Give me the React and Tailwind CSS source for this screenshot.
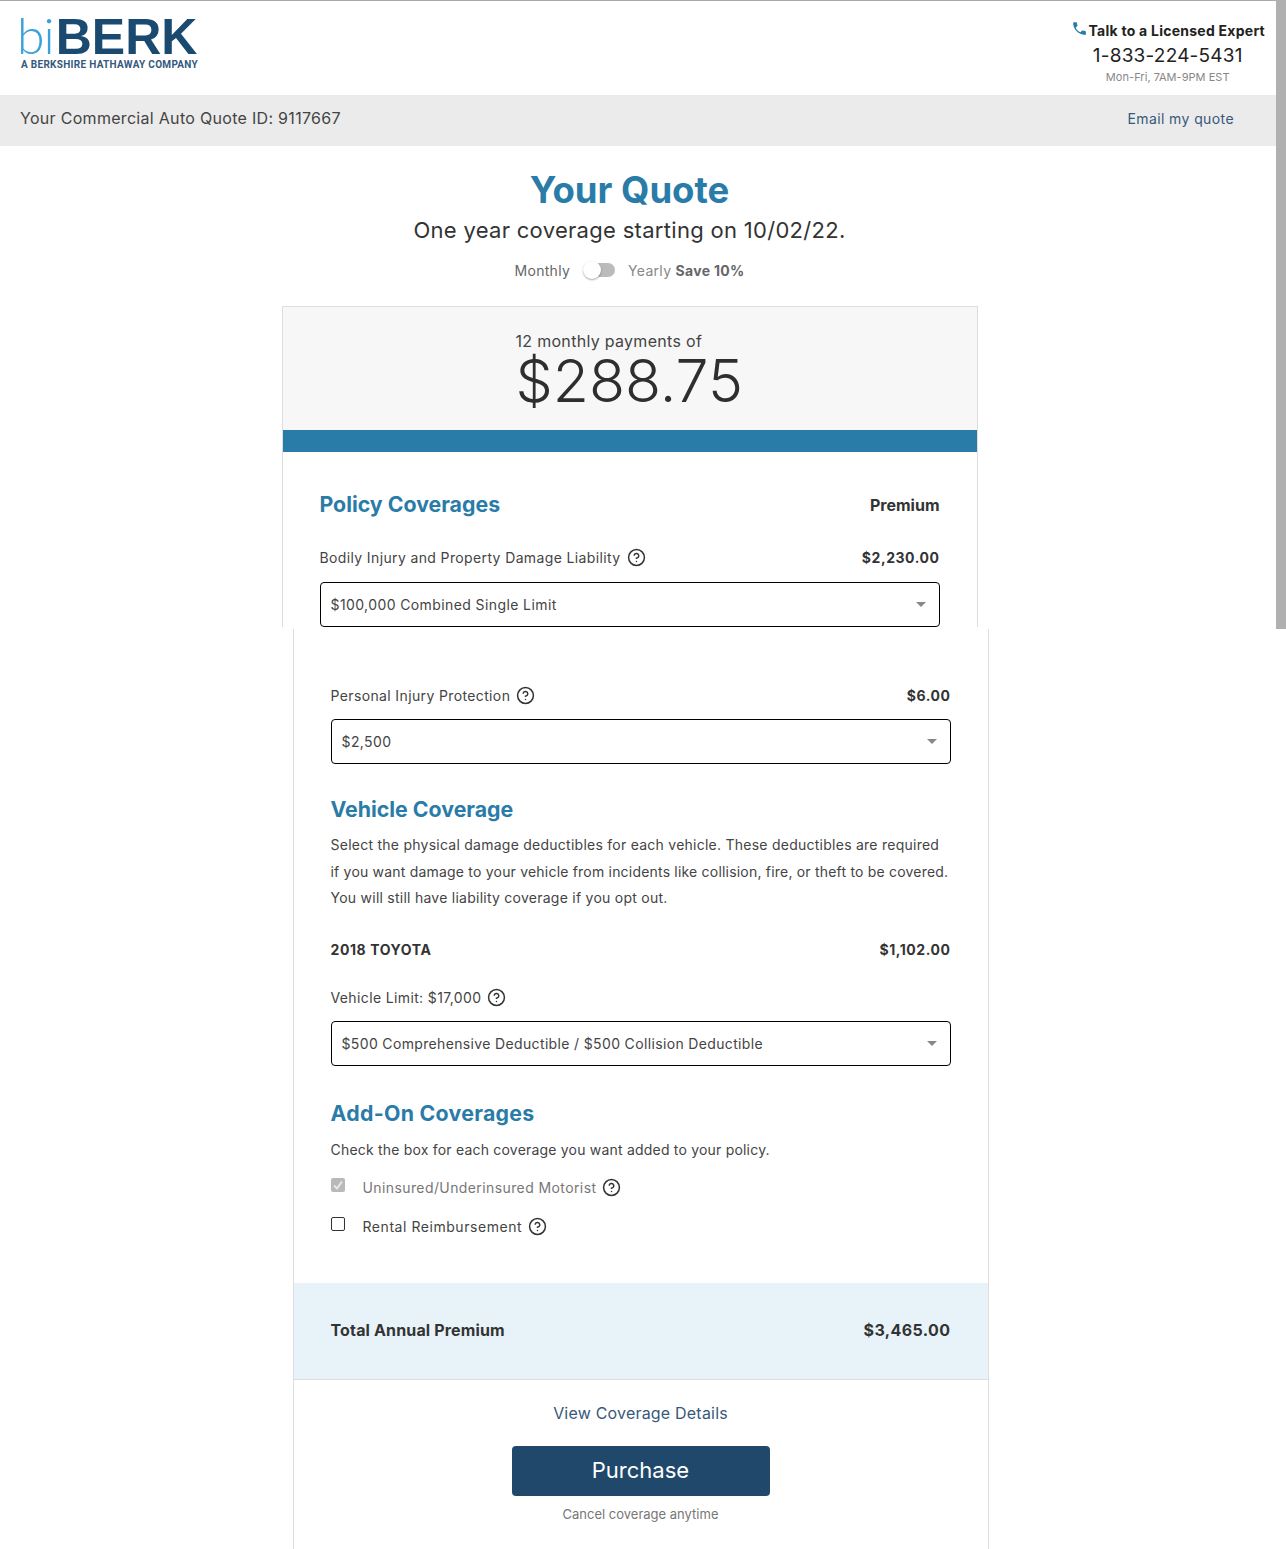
import React from "react";
import { CircleHelp } from "lucide-react";
import { MdPhone } from "react-icons/md";

const Help = () => <CircleHelp className="w-[19px] h-[19px] text-[#333] shrink-0" strokeWidth={1.9} />;

const Select = ({ value, narrow }) => (
  <div className={`h-[45px] border border-black rounded-[4px] flex items-center justify-between pl-[10px] pr-[13px] text-[14px] text-[#444] ${narrow ? "tracking-[0.35px]" : "tracking-[0.4px]"}`}>
    <span className={narrow ? "" : "-mt-px"}>{value}</span>
    <span className="w-0 h-0 border-x-[5px] border-x-transparent border-t-[5px] border-t-[#888]" />
  </div>
);

const Row = ({ children, right }) => (
  <div className="flex items-center justify-between h-[20px] text-[14px] tracking-[0.37px] text-[#444]">
    <div className="flex items-center gap-[6px]">{children}</div>
    <span className="font-bold text-[#333] tracking-[0.55px]">{right}</span>
  </div>
);

export default function App() {
  return (
    <div className="w-[1286px] bg-white text-[#333]" style={{ fontFamily: "Inter, sans-serif" }}>
      <div className="flex h-[629px] overflow-hidden">
        <div className="flex-1 min-w-0">
          <header className="h-[95px] border-t border-[#aaaaaa] flex justify-between pl-5 pr-[11px]">
            <div className="pt-[11px] w-[180px] -ml-[3px]" style={{ fontFamily: "'Liberation Sans', sans-serif" }}>
              <div className="flex items-baseline h-[47px] leading-[47px] text-[50px]">
                <span className="font-light text-[#3ba1d9] tracking-[-1px]" style={{ fontFamily: "Lato, sans-serif", fontWeight: 300 }}>bi</span>
                <span className="font-bold text-[#1b4a70] ml-[2px]">BERK</span>
              </div>
              <div className="ml-[3px] text-[10px] leading-[12px] font-bold text-[#34597c] tracking-[0.3px] whitespace-nowrap pl-px" style={{ fontFamily: "Roboto, sans-serif" }}>A BERKSHIRE HATHAWAY COMPANY</div>
            </div>
            <div className="flex flex-col items-center pt-[20px]">
              <div className="flex items-center text-[14px] leading-[20px] font-bold text-[#222] tracking-[0.25px]">
                <MdPhone className="w-[17px] h-[17px] text-[#2a7ca8] -mt-[6px] mr-[1px]" />
                <span>Talk to a Licensed Expert</span>
              </div>
              <div className="text-[19px] leading-[26px] text-[#222] tracking-[0.2px] mt-[2px]">1-833-224-5431</div>
              <div className="text-[11px] leading-[16px] text-[#888] tracking-[0.05px]">Mon-Fri, 7AM-9PM EST</div>
            </div>
          </header>
          <div className="h-[51px] bg-[#ebebeb] flex items-center justify-between pl-5 pr-[42px] pb-[5px]">
            <span className="text-[16px] tracking-[0.3px] text-[#444]">Your Commercial Auto Quote ID: 9117667</span>
            <span className="text-[14px] tracking-[0.4px] text-[#37597a]">Email my quote</span>
          </div>
          <main className="w-[1259px] flex flex-col items-center">
            <h1 className="mt-[22px] text-[36.5px] leading-[44px] font-bold text-[#2a7ca8]">Your Quote</h1>
            <p className="mt-[1px] text-[22px] leading-[34px] tracking-[0.3px] text-[#333]">One year coverage starting on 10/02/22.</p>
            <div className="mt-[12px] h-[22px] flex items-center text-[14px] tracking-[0.3px] text-[#666]">
              <span>Monthly</span>
              <span className="relative block ml-[13px] mr-[13px] w-[32px] h-[14px]">
                <span className="block ml-[2px] w-[30px] h-[14px] rounded-full bg-[#bbbbbb]" />
                <span className="absolute left-0 -top-[2px] w-[18px] h-[18px] rounded-full bg-white shadow-[0_1px_2px_rgba(0,0,0,0.35)]" />
              </span>
              <span className="text-[#888]">Yearly <b className="text-[#666] font-bold">Save 10%</b></span>
            </div>
            <section className="mt-[25px] w-[696px] border-x border-t border-[#dddddd]">
              <div className="h-[123px] bg-[#f7f7f7] flex flex-col items-center pt-[24px]">
                <div className="w-[228px]">
                  <div className="text-[16px] leading-[20px] tracking-[0.3px] text-[#444]">12 monthly payments of</div>
                  <div className="text-[59px] leading-[60px] text-[#2e2e2e] font-light">$288.75</div>
                </div>
              </div>
              <div className="h-[22px] bg-[#2a7ca8]" />
              <div className="px-[37px] pt-[38px]">
                <div className="flex items-center justify-between h-[30px]">
                  <h2 className="text-[21.3px] font-bold text-[#2a7ca8]">Policy Coverages</h2>
                  <span className="text-[16px] font-bold text-[#333]">Premium</span>
                </div>
                <div className="mt-[27px]"><Row right="$2,230.00">Bodily Injury and Property Damage Liability <Help /></Row></div>
                <div className="mt-[15px]"><Select value="$100,000 Combined Single Limit" /></div>
              </div>
            </section>
          </main>
        </div>
        <div className="w-[10px] bg-[#b0b0b0] shrink-0" />
      </div>

      <div className="w-[1281px] flex flex-col items-center">
        <section className="w-[696px] h-[920px] border-x border-[#dddddd]">
          <div className="px-[37px] pt-[56px]">
            <Row right="$6.00">Personal Injury Protection <Help /></Row>
            <div className="mt-[14px]"><Select value="$2,500" /></div>
            <h2 className="mt-[31px] h-[30px] flex items-center text-[21.3px] font-bold text-[#2a7ca8]">Vehicle Coverage</h2>
            <p className="mt-[7px] text-[14px] leading-[26.5px] tracking-[0.25px] text-[#444] whitespace-nowrap">
              Select the physical damage deductibles for each vehicle. These deductibles are required<br />
              <span className="tracking-[0.2px]">if you want damage to your vehicle from incidents like collision, fire, or theft to be covered.</span><br />
              You will still have liability coverage if you opt out.
            </p>
            <div className="mt-[28px]"><Row right="$1,102.00"><b className="font-bold text-[#333] tracking-[0.6px]">2018 TOYOTA</b></Row></div>
            <div className="mt-[28px]"><Row>Vehicle Limit: $17,000 <Help /></Row></div>
            <div className="mt-[13px]"><Select narrow value="$500 Comprehensive Deductible / $500 Collision Deductible" /></div>
            <h2 className="mt-[33px] h-[30px] flex items-center text-[21.3px] font-bold text-[#2a7ca8] tracking-[0.3px]">Add-On Coverages</h2>
            <p className="mt-[11px] h-[20px] leading-[20px] text-[14px] tracking-[0.2px] text-[#444]">Check the box for each coverage you want added to your policy.</p>
            <div className="mt-[18px] h-[20px] flex items-center text-[14px] tracking-[0.4px] text-[#777]">
              <span className="w-[14px] h-[14px] rounded-[2px] bg-[#b9b9b9] flex items-center justify-center mr-[18px] -mt-[5px]">
                <svg viewBox="0 0 14 14" className="w-[14px] h-[14px]"><path d="M3 7.5 6 10.5 11 3.5" fill="none" stroke="#e8e8e8" strokeWidth="2" /></svg>
              </span>
              <span className="mr-[6px]">Uninsured/Underinsured Motorist</span><Help />
            </div>
            <div className="mt-[19px] h-[20px] flex items-center text-[14px] tracking-[0.55px] text-[#444]">
              <span className="w-[14px] h-[14px] rounded-[2px] border border-[#333] bg-white mr-[18px] -mt-[5px]" />
              <span className="mr-[6px]">Rental Reimbursement</span><Help />
            </div>
          </div>
          <div className="mt-[46px] h-[97px] pb-[2px] bg-[#e8f3f9] border-b border-[#dddddd] px-[37px] flex items-center justify-between font-bold text-[#333]">
            <span className="text-[16px] tracking-[0.15px]">Total Annual Premium</span>
            <span className="text-[16px] tracking-[0.4px]">$3,465.00</span>
          </div>
          <div className="flex flex-col items-center">
            <div className="mt-[23px] h-[20px] leading-[20px] text-[16px] tracking-[0.2px] text-[#37597a]">View Coverage Details</div>
            <button className="mt-[23px] w-[258px] h-[50px] rounded-[4px] bg-[#20486b] text-white text-[22px]">Purchase</button>
            <div className="mt-[9px] text-[13px] leading-[18px] text-[#777]">Cancel coverage anytime</div>
          </div>
        </section>
      </div>
    </div>
  );
}
